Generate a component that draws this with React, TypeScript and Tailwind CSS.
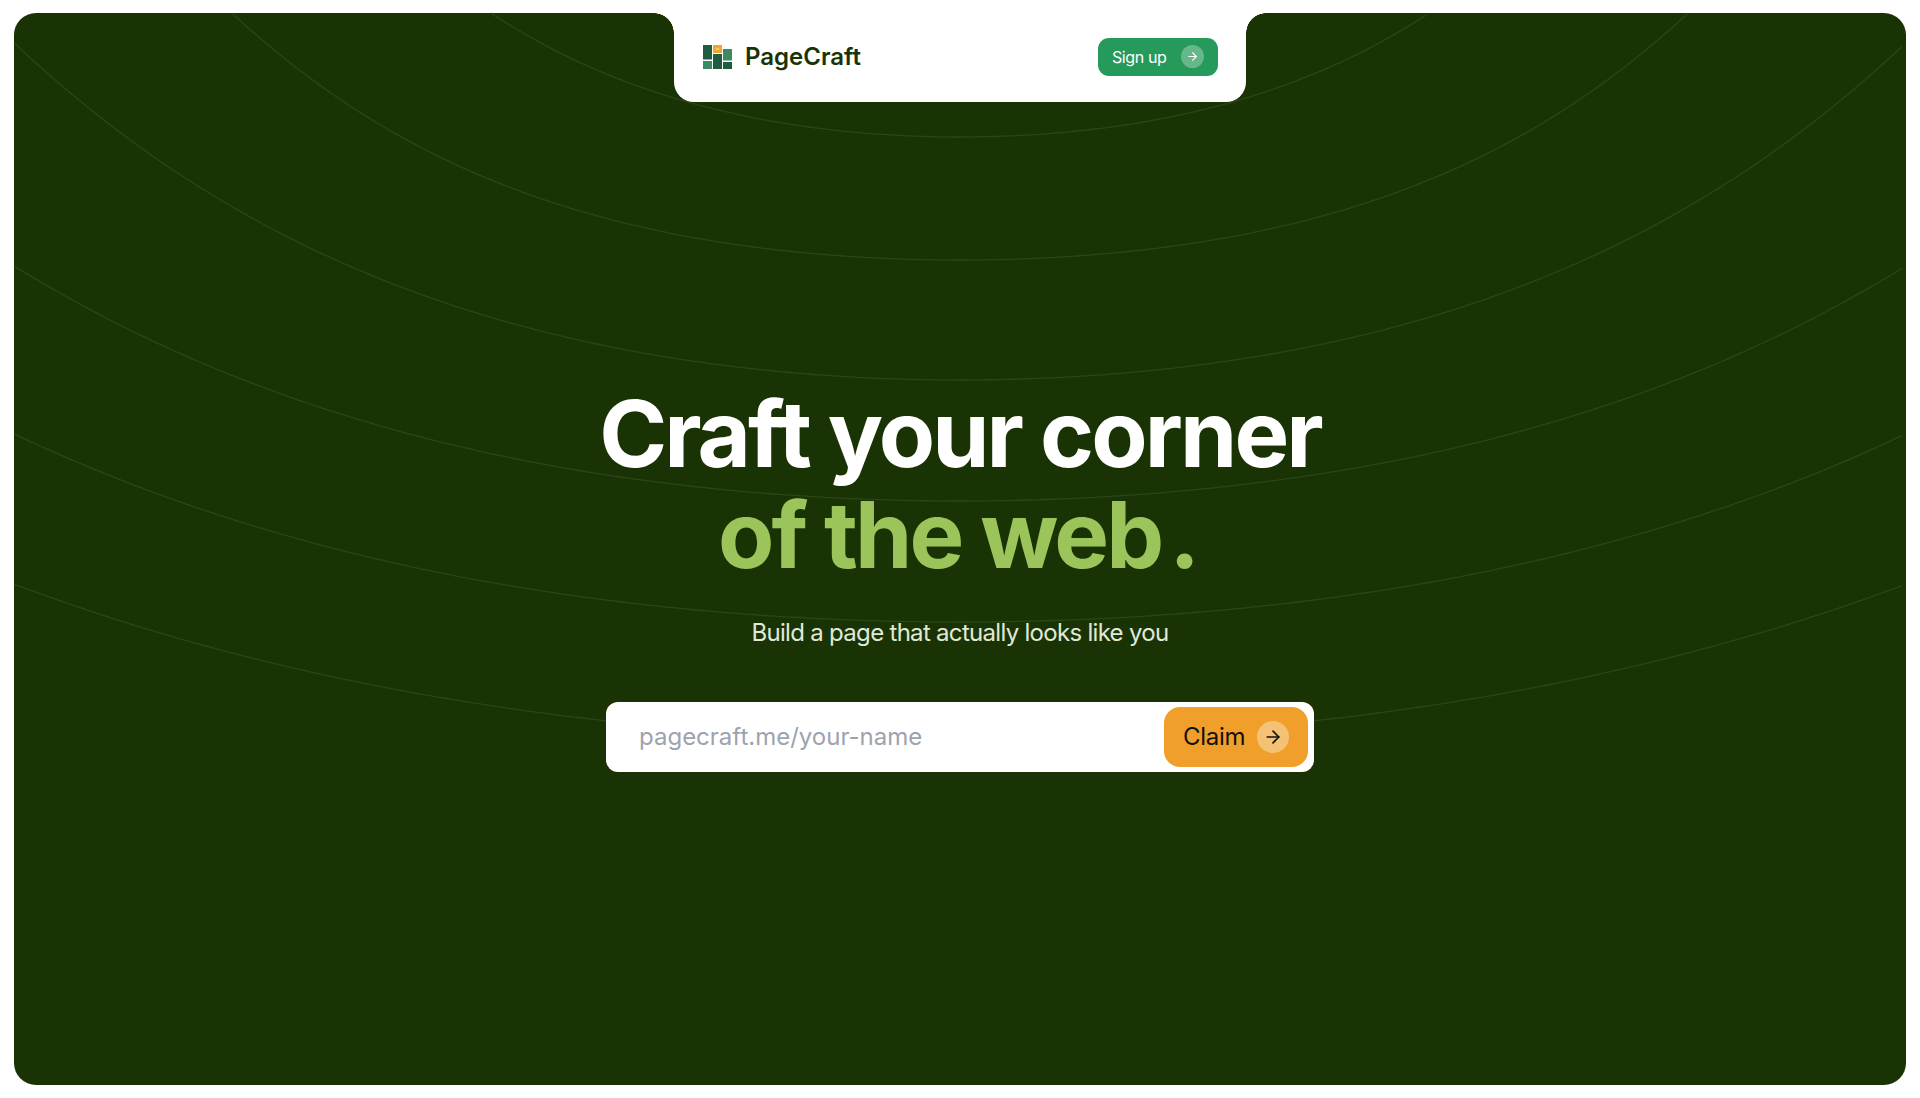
import { ArrowRight } from "lucide-react";

/* Each arc: y at centre, half-width reached at the panel edge, and the curve's two coefficients */
const ARCS = [
  { yc: 137, dmax: 469, a: 425, b: 628 },
  { yc: 260, dmax: 728, a: 292, b: 328 },
  { yc: 380, dmax: 946, a: 255, b: 136 },
  { yc: 501, dmax: 946, a: 200, b: 70 },
  { yc: 622, dmax: 946, a: 170, b: 45 },
  { yc: 740, dmax: 946, a: 150, b: 27 },
];

function arcPath({ yc, dmax, a, b }: (typeof ARCS)[number]): string {
  const parts: string[] = [];
  for (let d = -dmax; d <= dmax; d += 8) {
    const u2 = (d / 1000) * (d / 1000);
    const y = yc - a * u2 - b * u2 * u2;
    parts.push(`${parts.length ? "L" : "M"}${960 + d} ${y.toFixed(2)}`);
  }
  return parts.join(" ");
}

function Arcs() {
  return (
    <svg
      className="absolute left-[-14px] top-[-13px] pointer-events-none"
      width={1920}
      height={1098}
      viewBox="0 0 1920 1098"
      fill="none"
    >
      {ARCS.map((a, i) => (
        <path key={i} d={arcPath(a)} stroke="#2b4618" strokeWidth={1.3} />
      ))}
    </svg>
  );
}

function Logo() {
  return (
    <svg width={29} height={24} viewBox="0 0 29 24" className="shrink-0">
      <rect x="0" y="0" width="9" height="14.5" fill="#1f5c3f" />
      <rect x="0" y="16" width="9" height="8" fill="#3a8a63" />
      <rect x="10" y="0" width="9" height="8" rx="0.5" fill="#f0a52c" />
      <rect x="12.5" y="3.5" width="4" height="1" fill="#fbe3b0" />
      <rect x="10" y="9" width="9" height="15" fill="#1f5c3f" />
      <rect x="20" y="4" width="9" height="11.5" fill="#3a8a63" />
      <rect x="20" y="17" width="9" height="7" fill="#1f5c3f" />
    </svg>
  );
}

export default function App() {
  return (
    <div className="h-[1098px] bg-white px-[14px] py-[13px] font-['Inter','Liberation_Sans',sans-serif]">
      <div className="relative flex h-full flex-col items-center rounded-[22px] bg-[#193305]">
        <Arcs />

        <header className="relative -mt-[13px] flex h-[102px] w-[572px] shrink-0 items-center justify-between rounded-b-[20px] bg-white pl-[29px] pr-[28px] pt-[11px]">
          <div className="absolute left-[-20px] top-[13px] h-5 w-5 bg-[radial-gradient(circle_at_0_100%,transparent_19.5px,white_20px)]" />
          <div className="absolute right-[-20px] top-[13px] h-5 w-5 bg-[radial-gradient(circle_at_100%_100%,transparent_19.5px,white_20px)]" />
          <div className="flex items-center gap-[13px]">
            <Logo />
            <span className="text-[24px] font-semibold leading-none text-[#193305]">PageCraft</span>
          </div>
          <button className="flex h-[38px] w-[120px] items-center rounded-[11px] bg-[#259a5a] pl-[14px] text-[16px] font-normal tracking-[-0.4px] text-white">
            <span>Sign up</span>
            <span className="ml-[15px] flex h-[23px] w-[23px] items-center justify-center rounded-full bg-white/30">
              <ArrowRight size={13} strokeWidth={2} />
            </span>
          </button>
        </header>

        <main className="relative flex flex-col items-center pt-[281px]">
          <h1 className="whitespace-nowrap text-center text-[92px] font-bold leading-[101px] tracking-[-2.9px] text-white">
            <span className="block">Craft your corner</span>
            <span className="block pr-[5px] text-[#9bc55a]">
              of the web<span className="ml-[8px]">.</span>
            </span>
          </h1>
          <p className="mt-[32px] text-[24px] leading-[32px] tracking-[-0.7px] text-[#e0e9d8]">
            Build a page that actually looks like you
          </p>
          <form className="mt-[53px] flex h-[70px] w-[708px] items-center justify-between rounded-[12px] bg-white pl-[33px] pr-[6px]">
            <input
              readOnly
              placeholder="pagecraft.me/your-name"
              className="w-[400px] bg-transparent text-[24px] outline-none placeholder:text-[#9ca3af]"
            />
            <button
              type="button"
              className="flex h-[60px] w-[144px] items-center rounded-[16px] bg-[#f0a02a] pl-[19px] text-[24px] font-normal tracking-[-0.3px] text-[#111]"
            >
              <span>Claim</span>
              <span className="ml-[12px] flex h-[32px] w-[32px] items-center justify-center rounded-full bg-white/35">
                <ArrowRight size={20} strokeWidth={2} />
              </span>
            </button>
          </form>
        </main>
      </div>
    </div>
  );
}
